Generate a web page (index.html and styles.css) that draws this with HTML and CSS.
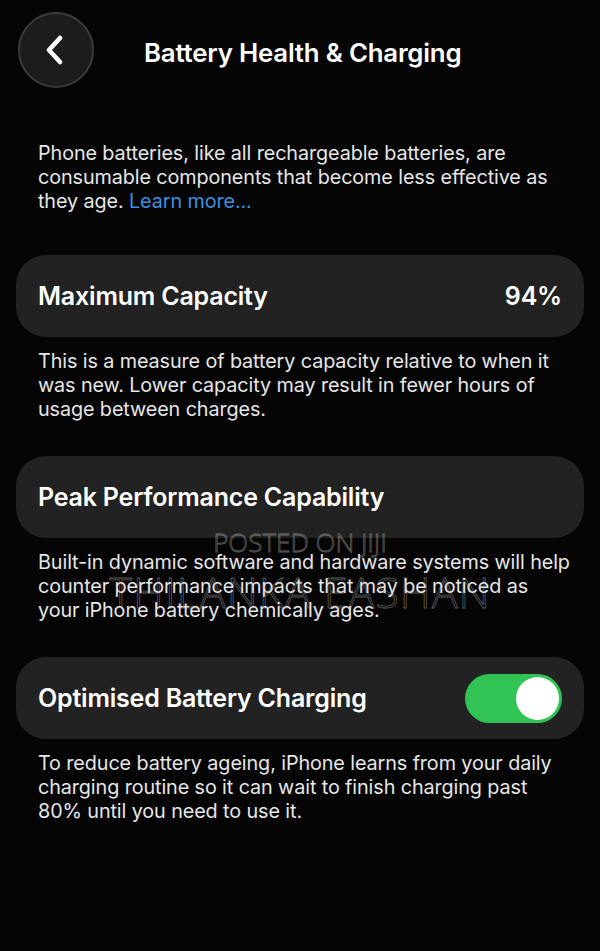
FILE: index.html
```html
<!DOCTYPE html>
<html lang="en">
<head>
    <meta charset="UTF-8">
    <meta name="viewport" content="width=device-width, initial-scale=1.0">
    <title>Battery Health &amp; Charging</title>
    <link rel="stylesheet" href="styles.css">
</head>
<body>
    <div class="screen">
        <div class="header">
            <div class="back-btn">
                <svg width="22" height="30" viewBox="0 0 22 30">
                    <path d="M16 3 L5 15 L16 27" fill="none" stroke="#fff" stroke-width="4.5" stroke-linecap="round" stroke-linejoin="round"/>
                </svg>
            </div>
            <div class="title">Battery Health &amp; Charging</div>
        </div>

        <p class="note intro">Phone batteries, like all rechargeable batteries, are<br>consumable components that become less effective as<br>they age. <span class="link">Learn more...</span></p>

        <div class="card">
            <span class="card-label">Maximum Capacity</span>
            <span class="card-value">94%</span>
        </div>
        <p class="note">This is a measure of battery capacity relative to when it<br>was new. Lower capacity may result in fewer hours of<br>usage between charges.</p>

        <div class="card">
            <span class="card-label">Peak Performance Capability</span>
        </div>
        <p class="note">Built-in dynamic software and hardware systems will help<br>counter performance impacts that may be noticed as<br>your iPhone battery chemically ages.</p>

        <div class="card">
            <span class="card-label">Optimised Battery Charging</span>
            <label class="switch">
                <input type="checkbox" checked>
                <span class="slider"></span>
            </label>
        </div>
        <p class="note">To reduce battery ageing, iPhone learns from your daily<br>charging routine so it can wait to finish charging past<br>80% until you need to use it.</p>

        <!-- watermark -->
        <div class="mark mark-small">POSTED ON JIJI</div>
        <div class="mark mark-big">THILANKA EASHAN</div>
    </div>
</body>
</html>
```

FILE: styles.css
```css
body {
    margin: 0;
    background: #050505;
    color: #fff;
    font-family: Inter, "Noto Sans", Arial, sans-serif;
}
.screen {
    position: relative;
    width: 600px;
    height: 951px;
    padding: 0 16px;
    box-sizing: border-box;
    overflow: hidden;
}
.header {
    display: flex;
    align-items: center;
    gap: 50px;
    padding-top: 12px;
    padding-left: 2px;
}
.back-btn {
    width: 72px;
    height: 72px;
    border-radius: 50%;
    background: #1c1c1d;
    border: 2px solid #3b3b3b;
    display: flex;
    align-items: center;
    justify-content: center;
}
.back-btn svg {
    margin-left: -2px;
}
.title {
    font-size: 25.8px;
    font-weight: 600;
    letter-spacing: -0.2px;
    margin-top: 4px;
}
.note {
    margin: 12px 0 35px;
    padding: 0 0 0 22px;
    font-size: 19.8px;
    line-height: 24px;
    color: #e6e6e6;
    letter-spacing: -0.1px;
    white-space: nowrap;
}
.intro {
    margin-top: 53px;
    margin-bottom: 42px;
}
.link {
    color: #3d8fe0;
}
.card {
    display: flex;
    align-items: center;
    justify-content: space-between;
    height: 82px;
    padding: 0 22px;
    border-radius: 30px;
    background: #222223;
}
.card-label,
.card-value {
    font-size: 25px;
    font-weight: 600;
    letter-spacing: -0.2px;
}
/* toggle switch */
.switch {
    position: relative;
    display: inline-block;
    width: 97px;
    height: 49px;
}
.switch input {
    opacity: 0;
    width: 0;
    height: 0;
}
.slider {
    position: absolute;
    inset: 0;
    border-radius: 25px;
    background: #3a3a3c;
}
.slider:before {
    position: absolute;
    content: "";
    width: 43px;
    height: 43px;
    border-radius: 50%;
    left: 3px;
    top: 3px;
    background: #fff;
}
input:checked + .slider {
    background: #31c454;
}
input:checked + .slider:before {
    transform: translateX(48px);
}
.mark {
    position: absolute;
    left: 0;
    right: 0;
    text-align: center;
    color: transparent;
    -webkit-text-stroke: 0.8px rgba(200, 200, 200, 0.45);
    font-family: "Open Sans", Arial, sans-serif;
    font-weight: 300;
    pointer-events: none;
}
.mark-small {
    top: 524px;
    font-size: 26px;
}
.mark-big {
    top: 562px;
    font-size: 43px;
    letter-spacing: 1px;
}
```
